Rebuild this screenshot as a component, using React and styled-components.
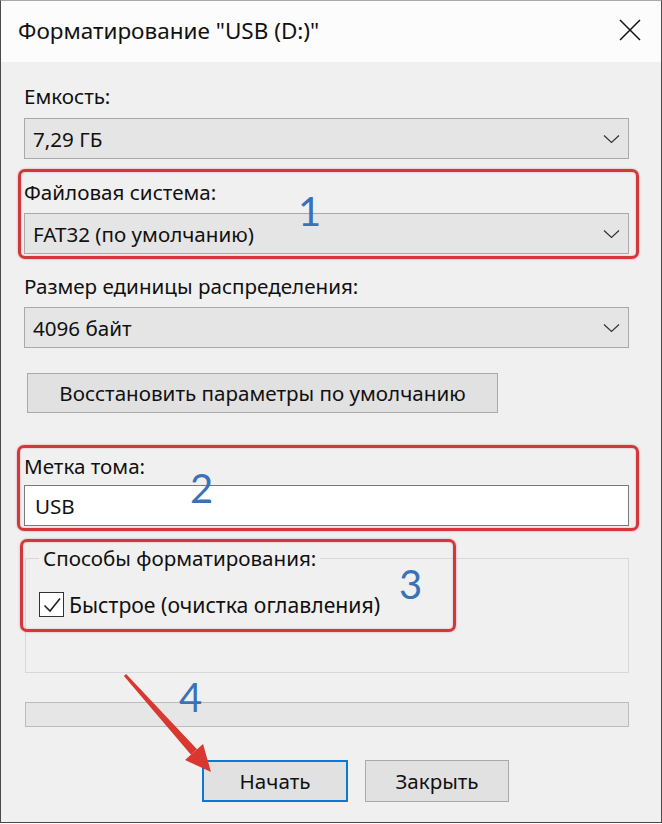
import React from "react";
import styled, { createGlobalStyle } from "styled-components";

const Global = createGlobalStyle`
  html, body { margin: 0; padding: 0; background: #ffffff; }
  body { font-family: "Noto Sans", "Open Sans", sans-serif; }
  * { box-sizing: border-box; }
`;

const Window = styled.div`
  position: relative;
  width: 662px;
  height: 823px;
  border: 1px solid #4a4a4a;
  border-top-color: #a8a8a8;
  background: #f0f0f0;
  display: flex;
  flex-direction: column;
  overflow: hidden;
`;

const TitleBar = styled.div`
  height: 61px;
  background: #fcfcfc;
  display: flex;
  align-items: center;
  justify-content: space-between;
  padding: 0 20px 0 17px;
`;

const Title = styled.div`
  font-size: 22.5px;
  color: #111;
  margin-top: -2px;
`;

const CloseIcon = styled.svg`
  width: 22px;
  height: 22px;
  display: block;
  margin-top: -3px;
`;

const Body = styled.div`
  display: flex;
  flex-direction: column;
  padding: 22px 32px 0 23px;
`;

const Label = styled.div`
  font-size: 20.6px;
  line-height: 24px;
  height: 24px;
  color: #111;
  margin-top: ${(p) => p.$mt || 0}px;
`;

const Combo = styled.div`
  margin-top: ${(p) => p.$mt || 0}px;
  height: 41px;
  background: #e5e5e5;
  border: 1px solid #a9a9a9;
  display: flex;
  align-items: center;
  justify-content: space-between;
  padding: 0 8px 0 8px;
  font-size: 20.6px;
  color: #111;
`;

const Chevron = styled.svg`
  width: 17px;
  height: 10px;
  display: block;
`;

const Button = styled.div`
  margin-top: ${(p) => p.$mt || 0}px;
  margin-left: ${(p) => p.$ml || 0}px;
  width: ${(p) => p.$w}px;
  height: ${(p) => p.$h || 40}px;
  background: #e1e1e1;
  border: ${(p) => (p.$primary ? "2px solid #0a78d4" : "1px solid #a9a9a9")};
  display: flex;
  align-items: center;
  justify-content: center;
  font-size: 20.6px;
  color: #111;
  flex: none;
`;

const TextInput = styled.div`
  margin-top: ${(p) => p.$mt || 0}px;
  height: 41px;
  background: #ffffff;
  border: 1px solid #7a7a7a;
  display: flex;
  align-items: center;
  padding-left: 10px;
  font-size: 20.6px;
  color: #111;
`;

const GroupBox = styled.div`
  position: relative;
  margin-top: ${(p) => p.$mt || 0}px;
  margin-left: 1px;
  height: 115px;
  border: 1px solid #d8d8d8;
  padding: 31px 0 0 13px;
`;

const Legend = styled.div`
  position: absolute;
  top: -13px;
  left: 13px;
  padding: 0 4px;
  background: #f0f0f0;
  font-size: 20.6px;
  line-height: 24px;
  color: #111;
`;

const CheckRow = styled.div`
  display: flex;
  align-items: center;
  gap: 5px;
  font-size: 21.2px;
  color: #111;
`;

const CheckBox = styled.div`
  width: 25px;
  height: 25px;
  border: 1.5px solid #333;
  background: #fff;
  display: flex;
  align-items: center;
  justify-content: center;
`;

const Progress = styled.div`
  margin-top: ${(p) => p.$mt || 0}px;
  margin-left: 1px;
  height: 25px;
  background: #e6e6e6;
  border: 1px solid #bcbcbc;
`;

const ButtonRow = styled.div`
  margin-top: ${(p) => p.$mt || 0}px;
  display: flex;
  gap: 17px;
  padding-left: 178px;
`;

const Highlight = styled.div`
  position: absolute;
  left: ${(p) => p.$x}px;
  top: ${(p) => p.$y}px;
  width: ${(p) => p.$w}px;
  height: ${(p) => p.$h}px;
  border: 3px solid #d2373a;
  border-radius: 7px;
  box-shadow: 0 0 2px rgba(210, 55, 58, 0.55), inset 0 0 2px rgba(210, 55, 58, 0.4);
  pointer-events: none;
`;

const Num = styled.div`
  position: absolute;
  left: ${(p) => p.$x}px;
  top: ${(p) => p.$y}px;
  font-family: "Lato", "Open Sans", sans-serif;
  font-weight: 400;
  font-size: 40px;
  line-height: 40px;
  color: #3a72b8;
  pointer-events: none;
`;

const Overlay = styled.svg`
  position: absolute;
  left: -1px;
  top: -1px;
  width: 662px;
  height: 824px;
  pointer-events: none;
`;

function ComboBox({ mt, children }) {
  return (
    <Combo $mt={mt}>
      <span>{children}</span>
      <Chevron viewBox="0 0 17 10">
        <path d="M1 1.5 L8.5 8.5 L16 1.5" fill="none" stroke="#333" strokeWidth="1.2" />
      </Chevron>
    </Combo>
  );
}

export default function App() {
  return (
    <>
      <Global />
      <Window>
        <TitleBar>
          <Title>Форматирование "USB (D:)"</Title>
          <CloseIcon viewBox="0 0 22 22">
            <path d="M1 1 L21 21 M21 1 L1 21" stroke="#111" strokeWidth="1.5" fill="none" />
          </CloseIcon>
        </TitleBar>
        <Body>
          <Label>Емкость:</Label>
          <ComboBox mt={10}>7,29 ГБ</ComboBox>
          <Label $mt={21}>Файловая система:</Label>
          <ComboBox mt={9}>FAT32 (по умолчанию)</ComboBox>
          <Label $mt={20}>Размер единицы распределения:</Label>
          <ComboBox mt={9}>4096 байт</ComboBox>
          <Button $mt={25} $ml={3} $w={471} $h={40}>
            Восстановить параметры по умолчанию
          </Button>
          <Label $mt={41}>Метка тома:</Label>
          <TextInput $mt={7}>USB</TextInput>
          <GroupBox $mt={32}>
            <Legend>Способы форматирования:</Legend>
            <CheckRow>
              <CheckBox>
                <svg width="20" height="18" viewBox="0 0 20 18">
                  <path d="M2.5 9.5 L8 15 L18 2.5" fill="none" stroke="#222" strokeWidth="1.6" />
                </svg>
              </CheckBox>
              Быстрое (очистка оглавления)
            </CheckRow>
          </GroupBox>
          <Progress $mt={29} />
          <ButtonRow $mt={33}>
            <Button $primary $w={146} $h={42}>Начать</Button>
            <Button $w={144} $h={42}>Закрыть</Button>
          </ButtonRow>
        </Body>

        <Highlight $x={17} $y={168} $w={621} $h={90} />
        <Highlight $x={16} $y={444} $w={622} $h={86} />
        <Highlight $x={19} $y={538} $w={436} $h={93} />
        <Num $x={297} $y={190}>1</Num>
        <Num $x={189} $y={467}>2</Num>
        <Num $x={398} $y={563}>3</Num>
        <Num $x={178} $y={676}>4</Num>
        <Overlay viewBox="0 0 662 824">
          <polygon
            points="126.1,674 123.9,676 191,754.7 197,749.3"
            fill="#d8382f"
          />
          <polygon points="211,772 185,760 203,744" fill="#d8382f" />
        </Overlay>
      </Window>
    </>
  );
}
